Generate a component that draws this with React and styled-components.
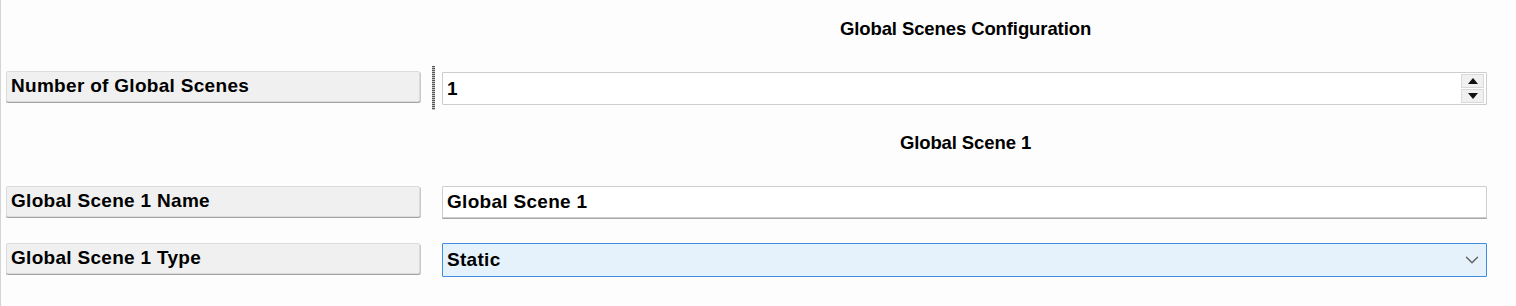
import React from "react";
import styled, { createGlobalStyle } from "styled-components";
import { ChevronDown } from "lucide-react";

const GlobalStyle = createGlobalStyle`
  html, body {
    margin: 0;
    padding: 0;
    background: #ffffff;
  }
  body {
    font-family: "Liberation Sans", Arial, sans-serif;
    color: #000000;
  }
`;

const Page = styled.div`
  width: 1516px;
  height: 306px;
  box-sizing: border-box;
  border-left: 1px solid #d4d4d4;
  padding: 0 29px 0 5px;
  background: #fdfdfd;
  overflow: hidden;
`;

const Row = styled.div`
  display: grid;
  grid-template-columns: 414px 22px 1fr;
  align-items: start;
  margin-top: ${(p) => p.$top || 0}px;
  height: ${(p) => (p.$height ? `${p.$height}px` : "auto")};
`;

const Title = styled.div`
  grid-column: 3;
  text-align: center;
  font-weight: bold;
  font-size: 18.5px;
  line-height: 20px;
  letter-spacing: -0.1px;
  padding-left: 2px;
  margin-top: ${(p) => p.$top || 0}px;
`;

const Label = styled.div`
  grid-column: 1;
  box-sizing: border-box;
  height: 31px;
  margin-top: ${(p) => p.$top || 0}px;
  display: flex;
  align-items: center;
  padding: 0 0 1px 4px;
  background: #f0f0f0;
  border: 1px solid #dcdcdc;
  border-radius: 2px;
  box-shadow: 0 1px 0 #a3a3a3, 1px 1px 0 #c9c9c9;
  font-weight: bold;
  font-size: 19px;
  letter-spacing: 0.3px;
  white-space: nowrap;
`;

const Splitter = styled.div`
  grid-column: 2;
  width: 3px;
  height: 44px;
  margin: 0 0 0 12px;
  box-sizing: border-box;
  background-image: repeating-linear-gradient(
    to bottom,
    #555 0 1px,
    #c8c8c8 1px 2px
  );
`;

const Field = styled.div`
  grid-column: 3;
  box-sizing: border-box;
  height: ${(p) => p.$height || 33}px;
  margin-top: ${(p) => p.$top || 0}px;
  display: flex;
  align-items: center;
  padding-left: 4px;
  background: ${(p) => (p.$active ? "#e5f1fb" : "#ffffff")};
  border: 1px solid ${(p) => (p.$active ? "#3c8ee0" : "#cdcdcd")};
  border-radius: 1px;
  box-shadow: ${(p) => (p.$raised ? "0 1px 0 #a8a8a8" : "none")};
  font-weight: bold;
  font-size: 19px;
  letter-spacing: 0.3px;
  white-space: nowrap;
`;

const Value = styled.span`
  flex: 1;
`;

const SpinBox = styled.div`
  display: flex;
  flex-direction: column;
  gap: 1px;
  margin-right: 2px;
`;

const SpinButton = styled.div`
  width: 23px;
  height: 14px;
  box-sizing: border-box;
  background: #f0f0f0;
  border: 1px solid #dadada;
  display: flex;
  align-items: center;
  justify-content: center;
`;

const Arrow = styled.span`
  width: 0;
  height: 0;
  border-left: 5px solid transparent;
  border-right: 5px solid transparent;
  ${(p) =>
    p.$up
      ? "border-bottom: 6px solid #111;"
      : "border-top: 6px solid #111;"}
`;

const Chevron = styled(ChevronDown)`
  color: #5f5f5f;
  margin-right: 3px;
`;

export default function App() {
  return (
    <>
      <GlobalStyle />
      <Page>
        <Row $height={66}>
          <Title $top={19}>Global Scenes Configuration</Title>
        </Row>

        <Row $height={44}>
          <Label $top={5}>Number of Global Scenes</Label>
          <Splitter />
          <Field $top={6}>
            <Value>1</Value>
            <SpinBox>
              <SpinButton>
                <Arrow $up />
              </SpinButton>
              <SpinButton>
                <Arrow />
              </SpinButton>
            </SpinBox>
          </Field>
        </Row>

        <Row $height={76}>
          <Title $top={23}>Global Scene 1</Title>
        </Row>

        <Row>
          <Label>Global Scene 1 Name</Label>
          <Field $raised $height={32}>
            <Value>Global Scene 1</Value>
          </Field>
        </Row>

        <Row $top={25}>
          <Label>Global Scene 1 Type</Label>
          <Field $active $height={34}>
            <Value>Static</Value>
            <Chevron size={22} strokeWidth={1.5} />
          </Field>
        </Row>
      </Page>
    </>
  );
}
